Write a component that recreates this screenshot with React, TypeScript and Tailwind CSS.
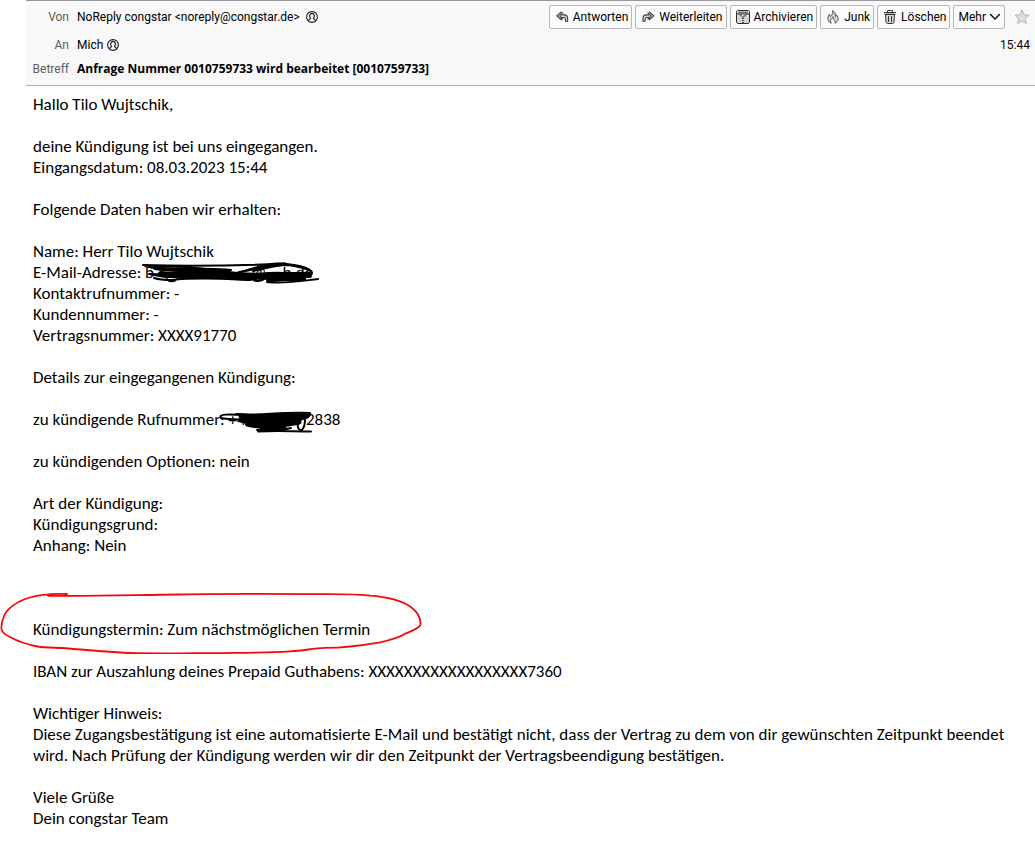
import React from "react";

const lineIcon = {
  fill: "none",
  stroke: "currentColor",
  strokeLinecap: "round",
  strokeLinejoin: "round",
} as const;

function ReplyIcon() {
  return (
    <svg className="size-4 shrink-0 text-[#3c3c3c]" viewBox="-2 -2 15 15" aria-hidden="true">
      <path {...lineIcon} fill="#d8d8d8" d="M4.800.8.600 4.500l4.200 3.700V6h2.400c1.200 0 1.600.8 1.600 1.700v1.800h2V6.800c0-2-1.200-3.300-3.200-3.300H5.500" />
      <path {...lineIcon} d="M6.300 1.500 3.200 4.500l3 3" />
    </svg>
  );
}

function ForwardIcon() {
  return (
    <svg className="size-4 shrink-0 text-[#3c3c3c]" viewBox="-2 -2 15 15" aria-hidden="true">
      <path {...lineIcon} fill="#d8d8d8" d="m6.800.8 4.200 3.700-4.200 3.700V6H4.400c-1.200 0-1.600.8-1.600 1.700v1.800h-2V6.800c0-2 1.200-3.300 3.200-3.300h2.100" />
      <path {...lineIcon} d="m5.300 1.500 3.100 3-3 3" />
    </svg>
  );
}

function ArchiveIcon() {
  return (
    <svg className="size-4 shrink-0 text-[#2e2e2e]" viewBox="0 0 16 16" aria-hidden="true">
      <path {...lineIcon} fill="#d2d2d2" d="M1.500 4.500v8.500c0 .9.600 1.500 1.500 1.500h10c.9 0 1.500-.6 1.500-1.500V4.500" />
      <path {...lineIcon} fill="#f8f8f8" d="M1.500 4.500v-1.500c0-.9.600-1.500 1.500-1.500h10c.9 0 1.500.6 1.500 1.500v1.500Z" />
      <path {...lineIcon} d="M3.500 3.200h9M4.500 5 8 8.500 11.500 5" />
      <path {...lineIcon} strokeDasharray="1 1" strokeLinecap="butt" strokeWidth="1.500" d="M8 9v5" />
    </svg>
  );
}

function JunkIcon() {
  return (
    <svg className="size-4 shrink-0 text-[#555555]" viewBox="-2 0 16 16" aria-hidden="true">
      <path {...lineIcon} fill="#d2d2d2" d="M4 14C1.500 12.800.6 11 .8 9c.1-1.500.9-2.500 1.600-3.600.3 1 .6 1.600 1.100 2C5 5.600 6.200 4.500 5.600 1.500 8 3 8.600 5 8.400 7.500c.8-.4 1-.9 1-1.700 2.600 3 2.400 6.400-1.200 8.200" />
      <path {...lineIcon} fill="#f8f8f8" d="M4 14c-1-1.600-.6-3 .6-4.200.7-.7 1-1.300 1.200-2 1 1 1 1.900.9 2.900 1.300 1 2.200 2 1.500 3.300" />
    </svg>
  );
}

function TrashIcon() {
  return (
    <svg className="size-4 shrink-0 text-[#333333]" viewBox="-2 0 16 16" aria-hidden="true">
      <path {...lineIcon} fill="#d2d2d2" d="M1.500 5.500 2 13c.1.900.6 1.500 1.500 1.500h5c.9 0 1.400-.6 1.500-1.500l.5-7.500Z" />
      <path {...lineIcon} d="M.5 3.500h11M3.500 3.300V1.500h5v1.800M.8 5.500h10.400M4.500 7.500v5M7.500 7.500v5" />
    </svg>
  );
}

function ContactIcon() {
  return (
    <svg className="size-3 shrink-0 text-[#1a1a1a]" viewBox="0 0 12 12" aria-hidden="true">
      <circle cx="6" cy="6" r="5.400" {...lineIcon} strokeWidth="1.100" />
      <path {...lineIcon} strokeWidth="1.200" d="M2.500 9.700c.3-1.100 1.100-1.700 2-2C3.300 6.200 3.100 2.300 6 2.300s2.700 3.900 1.500 5.400c.9.300 1.700.9 2 2" />
    </svg>
  );
}

function ToolbarButton({ children }: { children: React.ReactNode }) {
  return (
    <button
      type="button"
      className="flex h-6 items-center gap-[3px] rounded-xs border border-[#b8b8b8] bg-[#fbfbfb] pr-[3px] pl-1 whitespace-nowrap"
    >
      {children}
    </button>
  );
}

function Paragraph({ children }: { children: React.ReactNode }) {
  return <p className="mb-[21px]">{children}</p>;
}

function RedactedAddress() {
  return (
    <span className="relative inline-block w-[168px]">
      <span className="flex justify-between">
        <span>b</span>
        <span className="flex gap-4">
          <span>@</span>
          <span>b.de</span>
        </span>
      </span>
      <svg className="absolute -top-1 -left-1 h-8 w-[180px]" viewBox="0 0 180 32" aria-hidden="true">
        <g {...lineIcon} stroke="#000000" strokeWidth="2">
          <path d="M2 7C40 8 90 8 144 5.500 126 8 112 11 96 15 60 10 40 8 4 8c10 3 22 4 46 3 18-1 26 0 40 1-30 4-58 5-82 4 20 5 45 3 80 4 24 0 50 2 76 0" />
          <path d="M15 17c20-2 28 6 50 2 24-4 54 3 84-1 11-1 22 1 22-3-1-6-18-9-34-9.500-14 0-30 7-44 10M112 13c10-2 20-5 32-6 8 0 18 3 24 5" />
          <path d="M13 20c6 2 9 2 18 2 28-3 52-1 78 0 12-5 42-1 60-4M26 21c2 3 7 3 10 0M110 20c3 4 10 4 14 0M126 22c10-2 28-4 38-1-6 2-38 0-38 3 18 2 34-1 51-3" />
          <path strokeWidth="6" d="M20 16c18 2 36 0 54 1 18-1 37 2 54 0 11-1 24 1 40-.5" />
          <path strokeWidth="4" d="M14 10c18 3 44 2 72 3" />
        </g>
      </svg>
    </span>
  );
}

function RedactedNumber() {
  return (
    <span className="relative inline-block w-[112px]">
      <span className="flex justify-between">
        <span>+4</span>
        <span>2838</span>
      </span>
      <svg className="absolute -top-1 -left-[9px] h-8 w-[100px]" viewBox="0 0 100 32" aria-hidden="true">
        <g {...lineIcon} stroke="#000000" strokeWidth="2">
          <path d="M24 10C10 9-1 9 2 13c10 2 24 1 38 3M17 9c24 2 40-2 74-1 1 3-4 5-10 7-4 5-2 11 2 10 4-5 4-16 0-15M38 25c10 0 22 1 34-2M39 26.500c20-1 34 0 53 0" />
          <path strokeWidth="5" d="M22 11c20 2 40-1 66 0-8 3-18 3-30 4-14 1-26-1-36 0 10 4 26 2 58 2-12 3-34 4-52 1" />
          <path strokeWidth="3" d="M28 20c8 2 20 3 34 2M42 24c8-1 14-1 24-2" />
        </g>
      </svg>
    </span>
  );
}

function HandDrawnCircle() {
  return (
    <svg className="pointer-events-none absolute -top-[29px] -left-[33px] h-16 w-[424px] max-w-none" viewBox="0 0 424 64" aria-hidden="true">
      <path
        {...lineIcon}
        stroke="#f5090c"
        strokeWidth="1.800"
        d="M67 4C52 3.500 40 4.500 30 7.500 16 11.500 7 19 4 26 2 31 1 35 1.500 39 2 43 6 45 12 48c7 4 14 6 23 8 10 2 18 1.500 28 2 22 2 44 4 67 5 28 .8 54 .3 80 .1 28-.5 54 0 80-1.800 14-.5 22-3 35-3.500 20 0 35-2 55-5.500 10-2 18-4 26-9 8-3 14-6 14.500-8.500.5-8-3-13-10-18C402 11 388 7 370 5.700c-15-1.500-24-1.500-40-1.500-70-.5-110-.7-150 .3-46 .5-90 2-132 1.300"
      />
    </svg>
  );
}

export default function App() {
  return (
    <div className="min-h-screen bg-white text-black">
      <header className="ml-[26px] border-t border-b border-t-[#98989c] border-b-[#a9b1c3] bg-[#f8f8f8] pt-1 pb-1.5 font-['Roboto','Open_Sans',sans-serif] text-[12px] leading-4">
        <div className="flex h-6 items-center">
          <span className="w-[43px] shrink-0 text-right text-[#5c5c5c]">Von</span>
          <span className="ml-2 flex items-center gap-1.5 whitespace-nowrap">
            NoReply congstar &lt;noreply@congstar.de&gt; <ContactIcon />
          </span>
          <div className="ml-auto flex items-center gap-[3px] pr-[5px]">
            <ToolbarButton><ReplyIcon />Antworten</ToolbarButton>
            <ToolbarButton><ForwardIcon />Weiterleiten</ToolbarButton>
            <ToolbarButton><ArchiveIcon />Archivieren</ToolbarButton>
            <ToolbarButton><JunkIcon />Junk</ToolbarButton>
            <ToolbarButton><TrashIcon />Löschen</ToolbarButton>
            <ToolbarButton>
              Mehr
              <svg className="size-3" viewBox="0 0 12 12" aria-hidden="true">
                <path {...lineIcon} strokeWidth="1.300" d="m1.500 3.500 4.500 4.500 4.500-4.500" />
              </svg>
            </ToolbarButton>
            <button type="button" aria-label="Stern" className="ml-1.5">
              <svg className="size-4" viewBox="0 0 16 16" aria-hidden="true">
                <path {...lineIcon} fill="#dedede" stroke="#b4b4b4" d="m8 1.200 2 4.500 5 .5-3.700 3.300 1.100 4.900L8 11.900l-4.400 2.500 1.100-4.900L1 6.200l5-.5Z" />
              </svg>
            </button>
          </div>
        </div>
        <div className="mt-1.5 flex h-5 items-center">
          <span className="w-[43px] shrink-0 text-right text-[#5c5c5c]">An</span>
          <span className="ml-2 flex items-center gap-1">
            Mich <ContactIcon />
          </span>
          <time className="ml-auto pr-[5px]">15:44</time>
        </div>
        <div className="mt-1 flex h-5 items-center">
          <span className="w-[43px] shrink-0 text-right text-[#5c5c5c]">Betreff</span>
          <h1 className="ml-2 font-['Open_Sans','Noto_Sans',sans-serif] font-bold">Anfrage Nummer 0010759733 wird bearbeitet [0010759733]</h1>
        </div>
      </header>

      <main className="pt-2 pr-2 pl-[33px] font-['Carlito','Lato',sans-serif] text-[17px] leading-[21px]">
        <Paragraph>Hallo Tilo Wujtschik,</Paragraph>
        <Paragraph>
          deine Kündigung ist bei uns eingegangen.<br />
          Eingangsdatum: 08.03.2023 15:44
        </Paragraph>
        <Paragraph>Folgende Daten haben wir erhalten:</Paragraph>
        <Paragraph>
          Name: Herr Tilo Wujtschik<br />
          E-Mail-Adresse: <RedactedAddress /><br />
          Kontaktrufnummer: -<br />
          Kundennummer: -<br />
          Vertragsnummer: XXXX91770
        </Paragraph>
        <Paragraph>Details zur eingegangenen Kündigung:</Paragraph>
        <Paragraph>zu kündigende Rufnummer: <RedactedNumber /></Paragraph>
        <Paragraph>zu kündigenden Optionen: nein</Paragraph>
        <Paragraph>
          Art der Kündigung:<br />
          Kündigungsgrund:<br />
          Anhang: Nein
        </Paragraph>
        <div className="relative mt-[63px]">
          <Paragraph>Kündigungstermin: Zum nächstmöglichen Termin</Paragraph>
          <HandDrawnCircle />
        </div>
        <Paragraph>IBAN zur Auszahlung deines Prepaid Guthabens: XXXXXXXXXXXXXXXXXX7360</Paragraph>
        <Paragraph>
          Wichtiger Hinweis:<br />
          Diese Zugangsbestätigung ist eine automatisierte E-Mail und bestätigt nicht, dass der Vertrag zu dem von dir gewünschten Zeitpunkt beendet wird. Nach Prüfung der Kündigung werden wir dir den Zeitpunkt der Vertragsbeendigung bestätigen.
        </Paragraph>
        <p>
          Viele Grüße<br />
          Dein congstar Team
        </p>
      </main>
    </div>
  );
}
